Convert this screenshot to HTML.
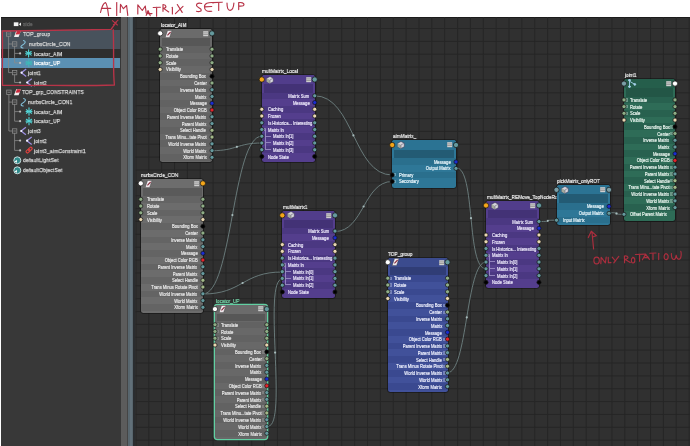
<!DOCTYPE html><html><head><meta charset="utf-8"><style>
*{margin:0;padding:0;box-sizing:border-box}
html,body{width:690px;height:446px;overflow:hidden;background:#ffffff;font-family:"Liberation Sans", sans-serif}
body>div,body>svg{will-change:transform}
.abs{position:absolute}
.lbl{position:absolute;font-size:6.1px;line-height:7px;white-space:nowrap;-webkit-text-stroke:0.2px currentColor;transform:scaleX(.78);transform-origin:0 50%}
.nd{position:absolute;border-radius:2.5px;overflow:hidden}
.hd,.sr,.rw{position:absolute;left:0;right:0}
.sr{left:1.6px;right:1.6px}
.tx{position:absolute;font-size:5.6px;line-height:6px;white-space:nowrap;-webkit-text-stroke:0.18px currentColor;transform:scaleX(.74);transform-origin:0 50%}
.tx.r{transform-origin:100% 50%}
.gp{position:absolute;width:2.6px;height:3.4px;opacity:.75}
.sb{position:absolute;opacity:.9}
.ol{position:absolute;font-size:6.2px;line-height:8px;white-space:nowrap;color:#dadada;-webkit-text-stroke:0.25px currentColor;letter-spacing:0.15px;transform:scaleX(.82);transform-origin:0 50%}
</style></head><body>

<div class="abs" style="left:1px;top:16.7px;width:689px;height:430px;background:#303030"></div>
<div class="abs" style="left:1px;top:17px;width:120px;height:429px;background:#383838"></div>
<div class="abs" style="left:1px;top:16.7px;width:120px;height:12.8px;background:#313131"></div>
<div class="abs" style="left:1px;top:16.7px;width:689px;height:1.4px;background:#1c1c1c"></div>
<div class="abs" style="left:1px;top:29.5px;width:119.4px;height:19.5px;background:#48525c"></div>
<div class="abs" style="left:1px;top:49px;width:120px;height:8.8px;background:#2e2e2e"></div>
<div class="abs" style="left:1px;top:57.8px;width:119.4px;height:10px;background:#5b90b3"></div>
<div class="abs" style="left:121px;top:17px;width:5.5px;height:429px;background:#5c5c5c"></div>
<div class="abs" style="left:126.5px;top:17px;width:1.2px;height:429px;background:#454545"></div>
<div class="abs" style="left:127.7px;top:17px;width:5.3px;height:429px;background:#58666e"></div>
<div class="abs" style="left:129.5px;top:17px;width:2.2px;height:429px;background:#617079"></div>
<div class="abs" style="left:133px;top:17px;width:1.8px;height:429px;background:#2a2d30"></div>
<div class="ol" style="left:22.8px;top:20.3px;color:#6a6a6a;">side</div>
<div class="ol" style="left:22.9px;top:30.4px;">TOP_group</div>
<div class="ol" style="left:28.5px;top:40.1px;">nurbsCircle_CON</div>
<div class="ol" style="left:34.1px;top:49.5px;">locator_AIM</div>
<div class="ol" style="left:34.1px;top:59.0px;color:#ffffff;">locator_UP</div>
<div class="ol" style="left:27.6px;top:68.7px;">joint1</div>
<div class="ol" style="left:33.6px;top:78.6px;">joint2</div>
<div class="ol" style="left:22.0px;top:88.4px;">TOP_grp_CONSTRAINTS</div>
<div class="ol" style="left:28.3px;top:98.3px;">nurbsCircle_CON1</div>
<div class="ol" style="left:34.4px;top:107.7px;">locator_AIM</div>
<div class="ol" style="left:34.4px;top:117.3px;">locator_UP</div>
<div class="ol" style="left:27.6px;top:127.0px;">joint3</div>
<div class="ol" style="left:33.6px;top:136.7px;">joint2</div>
<div class="ol" style="left:33.6px;top:146.5px;">joint3_aimConstraint1</div>
<div class="ol" style="left:22.5px;top:156.4px;">defaultLightSet</div>
<div class="ol" style="left:22.5px;top:166.3px;">defaultObjectSet</div>
<svg class="abs" style="left:0;top:0" width="130" height="190">
<g stroke="#8a8a8a" stroke-width="0.8" fill="none">
<path d="M8.6,36 V72.6 H12.4 M8.6,44 H12.4"/>
<path d="M14.6,46 V62.9 H19.4 M14.6,53.4 H19.4"/>
<path d="M14.6,74.6 V82.5 H19.4"/>
<path d="M8.9,94.3 V131 H12.4 M8.9,102.1 H12.4"/>
<path d="M14.6,104 V121.2 H19.4 M14.6,111.6 H19.4"/>
<path d="M14.6,133 V150.4 H19.4 M14.6,140.6 H19.4"/>
<rect x="6.4" y="31.8" width="4.4" height="4.4" fill="none" stroke="#8a8a8a"/>
<path d="M7.3,34.0 H9.9"/>
<rect x="12.4" y="41.8" width="4.4" height="4.4" fill="none" stroke="#8a8a8a"/>
<path d="M13.3,44.0 H15.9"/>
<rect x="12.4" y="70.4" width="4.4" height="4.4" fill="none" stroke="#8a8a8a"/>
<path d="M13.3,72.6 H15.9"/>
<rect x="6.7" y="90.1" width="4.4" height="4.4" fill="none" stroke="#8a8a8a"/>
<path d="M7.6,92.3 H10.2"/>
<rect x="12.4" y="99.9" width="4.4" height="4.4" fill="none" stroke="#8a8a8a"/>
<path d="M13.3,102.1 H15.9"/>
<rect x="12.4" y="128.8" width="4.4" height="4.4" fill="none" stroke="#8a8a8a"/>
<path d="M13.3,131.0 H15.9"/>
</g>
<circle cx="20.1" cy="53.4" r="1.1" fill="#bdbdbd"/>
<circle cx="20.1" cy="62.9" r="1.1" fill="#bdbdbd"/>
<circle cx="20.1" cy="82.5" r="1.1" fill="#bdbdbd"/>
<circle cx="20.1" cy="111.6" r="1.1" fill="#bdbdbd"/>
<circle cx="20.1" cy="121.2" r="1.1" fill="#bdbdbd"/>
<circle cx="20.1" cy="140.6" r="1.1" fill="#bdbdbd"/>
<circle cx="20.1" cy="150.4" r="1.1" fill="#bdbdbd"/>
<rect x="13.8" y="22.3" width="4.6" height="3.8" fill="#f4f4f4"/><path d="M18.8,24.2 L21.0,22.4 L21.0,26.0Z" fill="#f4f4f4"/>
<path d="M16.2,31.0 L20.8,31.0 L18.6,37.0 L14,37.0Z" fill="#f2eeee"/><path d="M17.0,31.0 L20.8,31.0 L19.6,34.2 L15.6,34.6Z" fill="#c92a3c"/>
<path d="M23.0,40.6 C25.4,40.800000000000004 25.8,42.2 24.4,43.6 L21.400000000000002,45.800000000000004 C20.2,47.0 21.2,48.2 23.400000000000002,48.0" fill="none" stroke="#86c4de" stroke-width="1.05"/>
<g stroke="#52d4d6" stroke-width="1.1" stroke-linecap="round"><line x1="28.60" y1="49.70" x2="28.60" y2="56.90"/><line x1="26.00" y1="51.50" x2="31.20" y2="55.10"/><line x1="26.00" y1="55.10" x2="31.20" y2="51.50"/><line x1="25.60" y1="53.30" x2="31.60" y2="53.30"/></g>
<g stroke="#3fb8b8" stroke-width="1.1" stroke-linecap="round"><line x1="28.80" y1="59.30" x2="28.80" y2="66.50"/><line x1="26.20" y1="61.10" x2="31.40" y2="64.70"/><line x1="26.20" y1="64.70" x2="31.40" y2="61.10"/><line x1="25.80" y1="62.90" x2="31.80" y2="62.90"/></g>
<path d="M26.2,69.0 L21.4,72.7 L26.2,76.4" fill="none" stroke="#9c8ee2" stroke-width="1.3"/><circle cx="21.599999999999998" cy="72.7" r="1.1" fill="#f4f4ff"/>
<path d="M31.8,78.8 L27,82.5 L31.8,86.2" fill="none" stroke="#9c8ee2" stroke-width="1.3"/><circle cx="27.2" cy="82.5" r="1.1" fill="#f4f4ff"/>
<path d="M16.2,89.2 L20.8,89.2 L18.6,95.2 L14,95.2Z" fill="#f2eeee"/><path d="M17.0,89.2 L20.8,89.2 L19.6,92.4 L15.6,92.8Z" fill="#c92a3c"/>
<path d="M23.2,98.60000000000001 C25.6,98.8 26,100.2 24.6,101.60000000000001 L21.6,103.8 C20.4,105.0 21.4,106.2 23.6,106.0" fill="none" stroke="#86c4de" stroke-width="1.05"/>
<g stroke="#52d4d6" stroke-width="1.1" stroke-linecap="round"><line x1="29.00" y1="107.90" x2="29.00" y2="115.10"/><line x1="26.40" y1="109.70" x2="31.60" y2="113.30"/><line x1="26.40" y1="113.30" x2="31.60" y2="109.70"/><line x1="26.00" y1="111.50" x2="32.00" y2="111.50"/></g>
<g stroke="#52d4d6" stroke-width="1.1" stroke-linecap="round"><line x1="29.00" y1="117.50" x2="29.00" y2="124.70"/><line x1="26.40" y1="119.30" x2="31.60" y2="122.90"/><line x1="26.40" y1="122.90" x2="31.60" y2="119.30"/><line x1="26.00" y1="121.10" x2="32.00" y2="121.10"/></g>
<path d="M25.900000000000002,127.3 L21.1,131.0 L25.900000000000002,134.7" fill="none" stroke="#9c8ee2" stroke-width="1.3"/><circle cx="21.3" cy="131.0" r="1.1" fill="#f4f4ff"/>
<path d="M31.7,137.0 L26.9,140.70000000000002 L31.7,144.4" fill="none" stroke="#9c8ee2" stroke-width="1.3"/><circle cx="27.099999999999998" cy="140.70000000000002" r="1.1" fill="#f4f4ff"/>
<g fill="none" stroke="#d8403e" stroke-width="1.2"><rect x="25.900000000000002" y="149.79999999999998" width="4.2" height="2.6" rx="1.3" transform="rotate(-40 28.0 151.1)"/><rect x="28.1" y="147.79999999999998" width="4.2" height="2.6" rx="1.3" transform="rotate(-40 30.200000000000003 149.1)"/></g>
<circle cx="17.3" cy="160.3" r="3.5" fill="#2f8a8a" stroke="#d8e4e4" stroke-width="0.9"/><path d="M14.6,161.6 L16.8,159.8 L17.0,162.8Z" fill="#ffffff"/>
<circle cx="17.3" cy="170.3" r="3.5" fill="#2f8a8a" stroke="#d8e4e4" stroke-width="0.9"/><path d="M14.6,171.6 L16.8,169.8 L17.0,172.8Z" fill="#ffffff"/>
</svg>
<svg class="abs" style="left:0;top:0" width="690" height="446">
<defs><clipPath id="cv"><rect x="135.6" y="17" width="560" height="430"/></clipPath></defs>
<g clip-path="url(#cv)" stroke="#262626" stroke-width="1">
<line x1="123.07" y1="17" x2="123.07" y2="446"/>
<line x1="135.94" y1="17" x2="135.94" y2="446"/>
<line x1="148.80" y1="17" x2="148.80" y2="446"/>
<line x1="161.67" y1="17" x2="161.67" y2="446"/>
<line x1="174.53" y1="17" x2="174.53" y2="446"/>
<line x1="187.40" y1="17" x2="187.40" y2="446"/>
<line x1="200.26" y1="17" x2="200.26" y2="446"/>
<line x1="213.12" y1="17" x2="213.12" y2="446"/>
<line x1="225.99" y1="17" x2="225.99" y2="446"/>
<line x1="238.86" y1="17" x2="238.86" y2="446"/>
<line x1="251.72" y1="17" x2="251.72" y2="446"/>
<line x1="264.59" y1="17" x2="264.59" y2="446"/>
<line x1="277.45" y1="17" x2="277.45" y2="446"/>
<line x1="290.32" y1="17" x2="290.32" y2="446"/>
<line x1="303.18" y1="17" x2="303.18" y2="446"/>
<line x1="316.05" y1="17" x2="316.05" y2="446"/>
<line x1="328.91" y1="17" x2="328.91" y2="446"/>
<line x1="341.77" y1="17" x2="341.77" y2="446"/>
<line x1="354.64" y1="17" x2="354.64" y2="446"/>
<line x1="367.50" y1="17" x2="367.50" y2="446"/>
<line x1="380.37" y1="17" x2="380.37" y2="446"/>
<line x1="393.24" y1="17" x2="393.24" y2="446"/>
<line x1="406.10" y1="17" x2="406.10" y2="446"/>
<line x1="418.97" y1="17" x2="418.97" y2="446"/>
<line x1="431.83" y1="17" x2="431.83" y2="446"/>
<line x1="444.69" y1="17" x2="444.69" y2="446"/>
<line x1="457.56" y1="17" x2="457.56" y2="446"/>
<line x1="470.43" y1="17" x2="470.43" y2="446"/>
<line x1="483.29" y1="17" x2="483.29" y2="446"/>
<line x1="496.16" y1="17" x2="496.16" y2="446"/>
<line x1="509.02" y1="17" x2="509.02" y2="446"/>
<line x1="521.88" y1="17" x2="521.88" y2="446"/>
<line x1="534.75" y1="17" x2="534.75" y2="446"/>
<line x1="547.62" y1="17" x2="547.62" y2="446"/>
<line x1="560.48" y1="17" x2="560.48" y2="446"/>
<line x1="573.35" y1="17" x2="573.35" y2="446"/>
<line x1="586.21" y1="17" x2="586.21" y2="446"/>
<line x1="599.08" y1="17" x2="599.08" y2="446"/>
<line x1="611.94" y1="17" x2="611.94" y2="446"/>
<line x1="624.81" y1="17" x2="624.81" y2="446"/>
<line x1="637.67" y1="17" x2="637.67" y2="446"/>
<line x1="650.54" y1="17" x2="650.54" y2="446"/>
<line x1="663.40" y1="17" x2="663.40" y2="446"/>
<line x1="676.27" y1="17" x2="676.27" y2="446"/>
<line x1="689.13" y1="17" x2="689.13" y2="446"/>
<line x1="135" y1="15.63" x2="690" y2="15.63"/>
<line x1="135" y1="28.50" x2="690" y2="28.50"/>
<line x1="135" y1="41.37" x2="690" y2="41.37"/>
<line x1="135" y1="54.23" x2="690" y2="54.23"/>
<line x1="135" y1="67.09" x2="690" y2="67.09"/>
<line x1="135" y1="79.96" x2="690" y2="79.96"/>
<line x1="135" y1="92.83" x2="690" y2="92.83"/>
<line x1="135" y1="105.69" x2="690" y2="105.69"/>
<line x1="135" y1="118.56" x2="690" y2="118.56"/>
<line x1="135" y1="131.42" x2="690" y2="131.42"/>
<line x1="135" y1="144.28" x2="690" y2="144.28"/>
<line x1="135" y1="157.15" x2="690" y2="157.15"/>
<line x1="135" y1="170.02" x2="690" y2="170.02"/>
<line x1="135" y1="182.88" x2="690" y2="182.88"/>
<line x1="135" y1="195.75" x2="690" y2="195.75"/>
<line x1="135" y1="208.61" x2="690" y2="208.61"/>
<line x1="135" y1="221.47" x2="690" y2="221.47"/>
<line x1="135" y1="234.34" x2="690" y2="234.34"/>
<line x1="135" y1="247.21" x2="690" y2="247.21"/>
<line x1="135" y1="260.07" x2="690" y2="260.07"/>
<line x1="135" y1="272.94" x2="690" y2="272.94"/>
<line x1="135" y1="285.80" x2="690" y2="285.80"/>
<line x1="135" y1="298.67" x2="690" y2="298.67"/>
<line x1="135" y1="311.53" x2="690" y2="311.53"/>
<line x1="135" y1="324.39" x2="690" y2="324.39"/>
<line x1="135" y1="337.26" x2="690" y2="337.26"/>
<line x1="135" y1="350.12" x2="690" y2="350.12"/>
<line x1="135" y1="362.99" x2="690" y2="362.99"/>
<line x1="135" y1="375.86" x2="690" y2="375.86"/>
<line x1="135" y1="388.72" x2="690" y2="388.72"/>
<line x1="135" y1="401.58" x2="690" y2="401.58"/>
<line x1="135" y1="414.45" x2="690" y2="414.45"/>
<line x1="135" y1="427.31" x2="690" y2="427.31"/>
<line x1="135" y1="440.18" x2="690" y2="440.18"/>
</g></svg>
<svg class="abs" style="left:0;top:0" width="690" height="446">
<path d="M212.0,150.7 C236.9,150.7 236.9,143.0 261.8,143.0" fill="none" stroke="#738787" stroke-width="0.85"/><circle cx="236.9" cy="146.8" r="1.1" fill="#a8bcbc"/>
<path d="M202.9,294.0 C232.4,294.0 232.4,136.2 261.8,136.2" fill="none" stroke="#738787" stroke-width="0.85"/><circle cx="232.4" cy="215.1" r="1.1" fill="#a8bcbc"/>
<path d="M202.9,294.0 C242.6,294.0 242.6,272.0 282.3,272.0" fill="none" stroke="#738787" stroke-width="0.85"/><circle cx="242.6" cy="283.0" r="1.1" fill="#a8bcbc"/>
<path d="M268.0,426.2 C288.0,426.2 262.3,279.0 282.3,279.0" fill="none" stroke="#738787" stroke-width="0.85"/><circle cx="275.1" cy="352.6" r="1.1" fill="#a8bcbc"/>
<path d="M314.7,95.8 C353.4,95.8 353.4,175.0 392.2,175.0" fill="none" stroke="#738787" stroke-width="0.85"/><circle cx="353.4" cy="135.4" r="1.1" fill="#a8bcbc"/>
<path d="M335.0,231.5 C363.6,231.5 363.6,181.5 392.2,181.5" fill="none" stroke="#738787" stroke-width="0.85"/><circle cx="363.6" cy="206.5" r="1.1" fill="#a8bcbc"/>
<path d="M456.0,167.7 C476.0,167.7 466.0,268.8 486.0,268.8" fill="none" stroke="#738787" stroke-width="0.85"/><circle cx="471.0" cy="218.2" r="1.1" fill="#a8bcbc"/>
<path d="M447.5,372.7 C467.5,372.7 466.0,262.0 486.0,262.0" fill="none" stroke="#738787" stroke-width="0.85"/><circle cx="466.8" cy="317.4" r="1.1" fill="#a8bcbc"/>
<path d="M539.0,221.5 C559.0,221.5 536.5,220.2 556.5,220.2" fill="none" stroke="#738787" stroke-width="0.85"/><circle cx="547.8" cy="220.8" r="1.1" fill="#a8bcbc"/>
<path d="M609.0,212.7 C629.0,212.7 604.0,214.3 624.0,214.3" fill="none" stroke="#738787" stroke-width="0.85"/><circle cx="616.5" cy="213.5" r="1.1" fill="#a8bcbc"/>
</svg>
<div class="lbl" style="left:160.80px;top:20.70px;color:#f2f2f2;">locator_AIM</div>
<div class="nd" style="left:160.20px;top:29.00px;width:51.80px;height:133.00px;background:#686868;box-shadow:0 0 0 0.8px rgba(10,10,10,.6);">
<div class="hd" style="height:8.75px;background:#6b6b6b"></div>
<div class="sr" style="top:8.75px;height:8.07px;background:#575757"></div>
<div class="rw" style="top:16.82px;height:6.81px;background:#626262"></div>
<div class="rw" style="top:23.58px;height:6.81px;background:#686868"></div>
<div class="rw" style="top:30.34px;height:6.81px;background:#626262"></div>
<div class="rw" style="top:37.10px;height:6.81px;background:#686868"></div>
<div class="rw" style="top:43.86px;height:6.81px;background:#626262"></div>
<div class="rw" style="top:50.62px;height:6.81px;background:#686868"></div>
<div class="rw" style="top:57.38px;height:6.81px;background:#626262"></div>
<div class="rw" style="top:64.14px;height:6.81px;background:#686868"></div>
<div class="rw" style="top:70.90px;height:6.81px;background:#626262"></div>
<div class="rw" style="top:77.66px;height:6.81px;background:#686868"></div>
<div class="rw" style="top:84.42px;height:6.81px;background:#626262"></div>
<div class="rw" style="top:91.18px;height:6.81px;background:#686868"></div>
<div class="rw" style="top:97.94px;height:6.81px;background:#626262"></div>
<div class="rw" style="top:104.70px;height:6.81px;background:#686868"></div>
<div class="rw" style="top:111.46px;height:6.81px;background:#626262"></div>
<div class="rw" style="top:118.22px;height:6.81px;background:#686868"></div>
<div class="rw" style="top:124.98px;height:6.81px;background:#626262"></div>
<div class="tx" style="left:5.70px;top:17.20px;color:#ececec">Translate</div>
<div class="tx" style="left:5.70px;top:23.96px;color:#ececec">Rotate</div>
<div class="tx" style="left:5.70px;top:30.72px;color:#ececec">Scale</div>
<div class="tx" style="left:5.70px;top:37.48px;color:#ececec">Visibility</div>
<div class="tx r" style="right:5.50px;top:44.24px;color:#ececec">Bounding Box</div>
<div class="tx r" style="right:5.50px;top:51.00px;color:#ececec">Center</div>
<div class="tx r" style="right:5.50px;top:57.76px;color:#ececec">Inverse Matrix</div>
<div class="tx r" style="right:5.50px;top:64.52px;color:#ececec">Matrix</div>
<div class="tx r" style="right:5.50px;top:71.28px;color:#ececec">Message</div>
<div class="tx r" style="right:5.50px;top:78.04px;color:#ececec">Object Color RGB</div>
<div class="tx r" style="right:5.50px;top:84.80px;color:#ececec">Parent Inverse Matrix</div>
<div class="tx r" style="right:5.50px;top:91.56px;color:#ececec">Parent Matrix</div>
<div class="tx r" style="right:5.50px;top:98.32px;color:#ececec">Select Handle</div>
<div class="tx r" style="right:5.50px;top:105.08px;color:#ececec">Trans Minu...tate Pivot</div>
<div class="tx r" style="right:5.50px;top:111.84px;color:#ececec">World Inverse Matrix</div>
<div class="tx r" style="right:5.50px;top:118.60px;color:#ececec">World Matrix</div>
<div class="tx r" style="right:5.50px;top:125.36px;color:#ececec">Xform Matrix</div>
</div>
<svg class="abs" style="left:164.60px;top:29.57px" width="8" height="8" viewBox="0 0 8 8"><path d="M2.6,0.5 L6.9,0.5 L4.6,7.4 L0.2,7.4Z" fill="#f3eef2" stroke="#2a2a2a" stroke-width="0.35"/><path d="M5.6,2.0 L2.4,5.4" stroke="#8a3040" stroke-width="1.1"/></svg>
<svg class="abs" style="left:203.00px;top:30.77px" width="6" height="6" viewBox="0 0 6 6"><rect x="0.2" y="0.2" width="5" height="5" fill="#cfcfcf"/><path d="M0.2,1.9 H5.2 M0.2,3.5 H5.2" stroke="#7a7a7a" stroke-width="0.6"/></svg>
<div class="lbl" style="left:262.40px;top:66.60px;color:#f2f2f2;">multMatrix_Local</div>
<div class="nd" style="left:261.80px;top:74.90px;width:52.90px;height:86.90px;background:#543e8d;box-shadow:0 0 0 0.8px rgba(10,10,10,.6);">
<div class="hd" style="height:9.12px;background:#513d8b"></div>
<div class="sr" style="top:9.12px;height:8.41px;background:#433276"></div>
<div class="rw" style="top:17.53px;height:6.79px;background:#4b3882"></div>
<div class="rw" style="top:24.27px;height:6.79px;background:#543e8d"></div>
<div class="rw" style="top:31.01px;height:6.79px;background:#4b3882"></div>
<div class="rw" style="top:37.75px;height:6.79px;background:#543e8d"></div>
<div class="rw" style="top:44.49px;height:6.79px;background:#4b3882"></div>
<div class="rw" style="top:51.23px;height:6.79px;background:#543e8d"></div>
<div class="rw" style="top:57.97px;height:6.79px;background:#4b3882"></div>
<div class="rw" style="top:64.71px;height:6.79px;background:#543e8d"></div>
<div class="rw" style="top:71.45px;height:6.79px;background:#4b3882"></div>
<div class="rw" style="top:78.19px;height:6.79px;background:#543e8d"></div>
<div class="tx r" style="right:5.50px;top:17.90px;color:#f2eeff">Matrix Sum</div>
<div class="tx r" style="right:5.50px;top:24.64px;color:#f2eeff">Message</div>
<div class="tx" style="left:5.70px;top:31.38px;color:#f2eeff">Caching</div>
<div class="tx" style="left:5.70px;top:38.12px;color:#f2eeff">Frozen</div>
<div class="tx" style="left:5.70px;top:44.86px;color:#f2eeff">Is Historica... Interesting</div>
<div class="tx" style="left:5.70px;top:51.60px;color:#f2eeff">Matrix In</div>
<div class="gp" style="left:1.3px;top:52.90px;background:#9a8cc4"></div>
<div class="tx" style="left:10.70px;top:58.34px;color:#f2eeff">Matrix In[1]</div>
<div class="sb" style="left:3.10px;top:54.40px;height:7.24px;width:6.40px;border-left:0.6px solid #9a8cc4;border-bottom:0.6px solid #9a8cc4;"></div>
<div class="tx" style="left:10.70px;top:65.08px;color:#f2eeff">Matrix In[2]</div>
<div class="sb" style="left:3.10px;top:61.14px;height:7.24px;width:6.40px;border-left:0.6px solid #9a8cc4;border-bottom:0.6px solid #9a8cc4;"></div>
<div class="tx" style="left:10.70px;top:71.82px;color:#f2eeff">Matrix In[3]</div>
<div class="sb" style="left:3.10px;top:67.88px;height:7.24px;width:6.40px;border-left:0.6px solid #9a8cc4;border-bottom:0.6px solid #9a8cc4;"></div>
<div class="tx" style="left:5.70px;top:78.56px;color:#f2eeff">Node State</div>
</div>
<svg class="abs" style="left:266.40px;top:75.56px" width="8" height="8" viewBox="0 0 8 8"><path d="M4,0.5 L7.3,2.2 L7.3,5.7 L4,7.4 L0.7,5.7 L0.7,2.2Z" fill="#d6d6dc" stroke="#2a2440" stroke-width="0.45"/><path d="M0.7,2.2 L4,3.9 L4,7.4 L0.7,5.7Z" fill="#a4aa9c"/><path d="M4,3.9 L7.3,2.2 M4,3.9 L4,7.4" stroke="#5a5070" stroke-width="0.5"/></svg>
<svg class="abs" style="left:305.70px;top:76.86px" width="6" height="6" viewBox="0 0 6 6"><rect x="0.2" y="0.2" width="5" height="5" fill="#cfcfcf"/><path d="M0.2,1.9 H5.2 M0.2,3.5 H5.2" stroke="#7a7a7a" stroke-width="0.6"/></svg>
<div class="lbl" style="left:392.80px;top:131.90px;color:#f2f2f2;">aimMatrix_</div>
<div class="nd" style="left:392.20px;top:140.20px;width:63.80px;height:47.60px;background:#2e7797;box-shadow:0 0 0 0.8px rgba(10,10,10,.6);">
<div class="hd" style="height:9.59px;background:#2b7393"></div>
<div class="sr" style="top:9.59px;height:8.85px;background:#235b74"></div>
<div class="rw" style="top:18.44px;height:6.58px;background:#2a6f8d"></div>
<div class="rw" style="top:24.97px;height:6.58px;background:#2e7797"></div>
<div class="rw" style="top:31.50px;height:6.58px;background:#2a6f8d"></div>
<div class="rw" style="top:38.03px;height:6.58px;background:#2e7797"></div>
<div class="tx r" style="right:5.50px;top:18.70px;color:#effaff">Message</div>
<div class="tx r" style="right:5.50px;top:25.23px;color:#effaff">Output Matrix</div>
<div class="tx" style="left:6.60px;top:31.76px;color:#effaff">Primary</div>
<div class="gp" style="left:1.3px;top:33.06px;background:#7ab0c4"></div>
<div class="tx" style="left:6.60px;top:38.29px;color:#effaff">Secondary</div>
<div class="gp" style="left:1.3px;top:39.59px;background:#7ab0c4"></div>
</div>
<svg class="abs" style="left:396.80px;top:141.09px" width="8" height="8" viewBox="0 0 8 8"><path d="M4,0.5 L7.3,2.2 L7.3,5.7 L4,7.4 L0.7,5.7 L0.7,2.2Z" fill="#d6d6dc" stroke="#2a2440" stroke-width="0.45"/><path d="M0.7,2.2 L4,3.9 L4,7.4 L0.7,5.7Z" fill="#a4aa9c"/><path d="M4,3.9 L7.3,2.2 M4,3.9 L4,7.4" stroke="#5a5070" stroke-width="0.5"/></svg>
<svg class="abs" style="left:447.00px;top:142.39px" width="6" height="6" viewBox="0 0 6 6"><rect x="0.2" y="0.2" width="5" height="5" fill="#cfcfcf"/><path d="M0.2,1.9 H5.2 M0.2,3.5 H5.2" stroke="#7a7a7a" stroke-width="0.6"/></svg>
<div class="lbl" style="left:624.60px;top:70.70px;color:#f2f2f2;">joint1</div>
<div class="nd" style="left:624.00px;top:79.00px;width:51.00px;height:142.00px;background:#2e6c57;box-shadow:0 0 0 0.8px rgba(10,10,10,.6);">
<div class="hd" style="height:9.12px;background:#255e4b"></div>
<div class="sr" style="top:9.12px;height:8.42px;background:#235646"></div>
<div class="rw" style="top:17.54px;height:6.78px;background:#28614f"></div>
<div class="rw" style="top:24.27px;height:6.78px;background:#2e6c57"></div>
<div class="rw" style="top:31.00px;height:6.78px;background:#28614f"></div>
<div class="rw" style="top:37.73px;height:6.78px;background:#2e6c57"></div>
<div class="rw" style="top:44.46px;height:6.78px;background:#28614f"></div>
<div class="rw" style="top:51.19px;height:6.78px;background:#2e6c57"></div>
<div class="rw" style="top:57.92px;height:6.78px;background:#28614f"></div>
<div class="rw" style="top:64.65px;height:6.78px;background:#2e6c57"></div>
<div class="rw" style="top:71.38px;height:6.78px;background:#28614f"></div>
<div class="rw" style="top:78.11px;height:6.78px;background:#2e6c57"></div>
<div class="rw" style="top:84.84px;height:6.78px;background:#28614f"></div>
<div class="rw" style="top:91.57px;height:6.78px;background:#2e6c57"></div>
<div class="rw" style="top:98.30px;height:6.78px;background:#28614f"></div>
<div class="rw" style="top:105.03px;height:6.78px;background:#2e6c57"></div>
<div class="rw" style="top:111.76px;height:6.78px;background:#28614f"></div>
<div class="rw" style="top:118.49px;height:6.78px;background:#2e6c57"></div>
<div class="rw" style="top:125.22px;height:6.78px;background:#28614f"></div>
<div class="rw" style="top:131.95px;height:6.78px;background:#2e6c57"></div>
<div class="tx" style="left:5.70px;top:17.90px;color:#eef8f2">Translate</div>
<div class="gp" style="left:1.3px;top:19.20px;background:#80aa98"></div>
<div class="tx" style="left:5.70px;top:24.63px;color:#eef8f2">Rotate</div>
<div class="gp" style="left:1.3px;top:25.93px;background:#80aa98"></div>
<div class="tx" style="left:5.70px;top:31.36px;color:#eef8f2">Scale</div>
<div class="gp" style="left:1.3px;top:32.66px;background:#80aa98"></div>
<div class="tx" style="left:5.70px;top:38.09px;color:#eef8f2">Visibility</div>
<div class="tx r" style="right:5.50px;top:44.82px;color:#eef8f2">Bounding Box</div>
<div class="gp" style="right:2.0px;top:46.12px;background:#80aa98"></div>
<div class="tx r" style="right:5.50px;top:51.55px;color:#eef8f2">Center</div>
<div class="gp" style="right:2.0px;top:52.85px;background:#80aa98"></div>
<div class="tx r" style="right:5.50px;top:58.28px;color:#eef8f2">Inverse Matrix</div>
<div class="tx r" style="right:5.50px;top:65.01px;color:#eef8f2">Matrix</div>
<div class="tx r" style="right:5.50px;top:71.74px;color:#eef8f2">Message</div>
<div class="tx r" style="right:5.50px;top:78.47px;color:#eef8f2">Object Color RGB</div>
<div class="gp" style="right:2.0px;top:79.77px;background:#80aa98"></div>
<div class="tx r" style="right:5.50px;top:85.20px;color:#eef8f2">Parent Inverse Matrix</div>
<div class="gp" style="right:2.0px;top:86.50px;background:#80aa98"></div>
<div class="tx r" style="right:5.50px;top:91.93px;color:#eef8f2">Parent Matrix</div>
<div class="gp" style="right:2.0px;top:93.23px;background:#80aa98"></div>
<div class="tx r" style="right:5.50px;top:98.66px;color:#eef8f2">Select Handle</div>
<div class="gp" style="right:2.0px;top:99.96px;background:#80aa98"></div>
<div class="tx r" style="right:5.50px;top:105.39px;color:#eef8f2">Trans Minu...tate Pivot</div>
<div class="gp" style="right:2.0px;top:106.69px;background:#80aa98"></div>
<div class="tx r" style="right:5.50px;top:112.12px;color:#eef8f2">World Inverse Matrix</div>
<div class="gp" style="right:2.0px;top:113.42px;background:#80aa98"></div>
<div class="tx r" style="right:5.50px;top:118.85px;color:#eef8f2">World Matrix</div>
<div class="gp" style="right:2.0px;top:120.15px;background:#80aa98"></div>
<div class="tx r" style="right:5.50px;top:125.58px;color:#eef8f2">Xform Matrix</div>
<div class="tx" style="left:5.70px;top:132.31px;color:#eef8f2">Offset Parent Matrix</div>
</div>
<svg class="abs" style="left:628.00px;top:78.96px" width="9" height="9" viewBox="0 0 9 9" fill="none" stroke="#a8d4ee" stroke-width="0.9"><path d="M1.5,1 L1.5,8 M1.5,2.2 L6.5,5.2 M0.5,1.2 L2.5,1.2 M0.5,7.6 L2.5,7.6"/><circle cx="1.5" cy="1.2" r="0.9" fill="#a8d4ee"/><circle cx="1.5" cy="7.6" r="0.9" fill="#a8d4ee"/><circle cx="6.8" cy="5.4" r="0.9" fill="#a8d4ee"/></svg>
<svg class="abs" style="left:666.00px;top:80.96px" width="6" height="6" viewBox="0 0 6 6"><rect x="0.2" y="0.2" width="5" height="5" fill="#cfcfcf"/><path d="M0.2,1.9 H5.2 M0.2,3.5 H5.2" stroke="#7a7a7a" stroke-width="0.6"/></svg>
<div class="lbl" style="left:141.40px;top:170.60px;color:#f2f2f2;">nurbsCircle_CON</div>
<div class="nd" style="left:140.80px;top:178.90px;width:62.10px;height:133.90px;background:#6c6c6c;box-shadow:0 0 0 0.8px rgba(10,10,10,.6);">
<div class="hd" style="height:8.85px;background:#6d6d6d"></div>
<div class="sr" style="top:8.85px;height:8.17px;background:#5a5a5a"></div>
<div class="rw" style="top:17.03px;height:6.80px;background:#646464"></div>
<div class="rw" style="top:23.78px;height:6.80px;background:#6c6c6c"></div>
<div class="rw" style="top:30.53px;height:6.80px;background:#646464"></div>
<div class="rw" style="top:37.28px;height:6.80px;background:#6c6c6c"></div>
<div class="rw" style="top:44.03px;height:6.80px;background:#646464"></div>
<div class="rw" style="top:50.78px;height:6.80px;background:#6c6c6c"></div>
<div class="rw" style="top:57.53px;height:6.80px;background:#646464"></div>
<div class="rw" style="top:64.28px;height:6.80px;background:#6c6c6c"></div>
<div class="rw" style="top:71.03px;height:6.80px;background:#646464"></div>
<div class="rw" style="top:77.78px;height:6.80px;background:#6c6c6c"></div>
<div class="rw" style="top:84.53px;height:6.80px;background:#646464"></div>
<div class="rw" style="top:91.28px;height:6.80px;background:#6c6c6c"></div>
<div class="rw" style="top:98.03px;height:6.80px;background:#646464"></div>
<div class="rw" style="top:104.78px;height:6.80px;background:#6c6c6c"></div>
<div class="rw" style="top:111.53px;height:6.80px;background:#646464"></div>
<div class="rw" style="top:118.28px;height:6.80px;background:#6c6c6c"></div>
<div class="rw" style="top:125.03px;height:6.80px;background:#646464"></div>
<div class="tx" style="left:5.70px;top:17.40px;color:#ececec">Translate</div>
<div class="tx" style="left:5.70px;top:24.15px;color:#ececec">Rotate</div>
<div class="tx" style="left:5.70px;top:30.90px;color:#ececec">Scale</div>
<div class="tx" style="left:5.70px;top:37.65px;color:#ececec">Visibility</div>
<div class="tx r" style="right:5.50px;top:44.40px;color:#ececec">Bounding Box</div>
<div class="tx r" style="right:5.50px;top:51.15px;color:#ececec">Center</div>
<div class="tx r" style="right:5.50px;top:57.90px;color:#ececec">Inverse Matrix</div>
<div class="tx r" style="right:5.50px;top:64.65px;color:#ececec">Matrix</div>
<div class="tx r" style="right:5.50px;top:71.40px;color:#ececec">Message</div>
<div class="tx r" style="right:5.50px;top:78.15px;color:#ececec">Object Color RGB</div>
<div class="tx r" style="right:5.50px;top:84.90px;color:#ececec">Parent Inverse Matrix</div>
<div class="tx r" style="right:5.50px;top:91.65px;color:#ececec">Parent Matrix</div>
<div class="tx r" style="right:5.50px;top:98.40px;color:#ececec">Select Handle</div>
<div class="tx r" style="right:5.50px;top:105.15px;color:#ececec">Trans Minus Rotate Pivot</div>
<div class="tx r" style="right:5.50px;top:111.90px;color:#ececec">World Inverse Matrix</div>
<div class="tx r" style="right:5.50px;top:118.65px;color:#ececec">World Matrix</div>
<div class="tx r" style="right:5.50px;top:125.40px;color:#ececec">Xform Matrix</div>
</div>
<svg class="abs" style="left:145.20px;top:179.53px" width="8" height="8" viewBox="0 0 8 8"><path d="M2.6,0.5 L6.9,0.5 L4.6,7.4 L0.2,7.4Z" fill="#f3eef2" stroke="#2a2a2a" stroke-width="0.35"/><path d="M5.6,2.0 L2.4,5.4" stroke="#8a3040" stroke-width="1.1"/></svg>
<svg class="abs" style="left:193.90px;top:180.73px" width="6" height="6" viewBox="0 0 6 6"><rect x="0.2" y="0.2" width="5" height="5" fill="#cfcfcf"/><path d="M0.2,1.9 H5.2 M0.2,3.5 H5.2" stroke="#7a7a7a" stroke-width="0.6"/></svg>
<div class="lbl" style="left:486.60px;top:192.70px;color:#f2f2f2;">multMatrix_REMove_TopNodeRot</div>
<div class="nd" style="left:486.00px;top:201.00px;width:53.00px;height:86.60px;background:#543e8d;box-shadow:0 0 0 0.8px rgba(10,10,10,.6);">
<div class="hd" style="height:8.90px;background:#513d8b"></div>
<div class="sr" style="top:8.90px;height:8.22px;background:#433276"></div>
<div class="rw" style="top:17.12px;height:6.81px;background:#4b3882"></div>
<div class="rw" style="top:23.88px;height:6.81px;background:#543e8d"></div>
<div class="rw" style="top:30.64px;height:6.81px;background:#4b3882"></div>
<div class="rw" style="top:37.40px;height:6.81px;background:#543e8d"></div>
<div class="rw" style="top:44.16px;height:6.81px;background:#4b3882"></div>
<div class="rw" style="top:50.92px;height:6.81px;background:#543e8d"></div>
<div class="rw" style="top:57.68px;height:6.81px;background:#4b3882"></div>
<div class="rw" style="top:64.44px;height:6.81px;background:#543e8d"></div>
<div class="rw" style="top:71.20px;height:6.81px;background:#4b3882"></div>
<div class="rw" style="top:77.96px;height:6.81px;background:#543e8d"></div>
<div class="tx r" style="right:5.50px;top:17.50px;color:#f2eeff">Matrix Sum</div>
<div class="tx r" style="right:5.50px;top:24.26px;color:#f2eeff">Message</div>
<div class="tx" style="left:5.70px;top:31.02px;color:#f2eeff">Caching</div>
<div class="tx" style="left:5.70px;top:37.78px;color:#f2eeff">Frozen</div>
<div class="tx" style="left:5.70px;top:44.54px;color:#f2eeff">Is Historica... Interesting</div>
<div class="tx" style="left:5.70px;top:51.30px;color:#f2eeff">Matrix In</div>
<div class="gp" style="left:1.3px;top:52.60px;background:#9a8cc4"></div>
<div class="tx" style="left:10.70px;top:58.06px;color:#f2eeff">Matrix In[0]</div>
<div class="sb" style="left:3.10px;top:54.10px;height:7.26px;width:6.40px;border-left:0.6px solid #9a8cc4;border-bottom:0.6px solid #9a8cc4;"></div>
<div class="tx" style="left:10.70px;top:64.82px;color:#f2eeff">Matrix In[1]</div>
<div class="sb" style="left:3.10px;top:60.86px;height:7.26px;width:6.40px;border-left:0.6px solid #9a8cc4;border-bottom:0.6px solid #9a8cc4;"></div>
<div class="tx" style="left:10.70px;top:71.58px;color:#f2eeff">Matrix In[2]</div>
<div class="sb" style="left:3.10px;top:67.62px;height:7.26px;width:6.40px;border-left:0.6px solid #9a8cc4;border-bottom:0.6px solid #9a8cc4;"></div>
<div class="tx" style="left:5.70px;top:78.34px;color:#f2eeff">Node State</div>
</div>
<svg class="abs" style="left:490.60px;top:201.55px" width="8" height="8" viewBox="0 0 8 8"><path d="M4,0.5 L7.3,2.2 L7.3,5.7 L4,7.4 L0.7,5.7 L0.7,2.2Z" fill="#d6d6dc" stroke="#2a2440" stroke-width="0.45"/><path d="M0.7,2.2 L4,3.9 L4,7.4 L0.7,5.7Z" fill="#a4aa9c"/><path d="M4,3.9 L7.3,2.2 M4,3.9 L4,7.4" stroke="#5a5070" stroke-width="0.5"/></svg>
<svg class="abs" style="left:530.00px;top:202.85px" width="6" height="6" viewBox="0 0 6 6"><rect x="0.2" y="0.2" width="5" height="5" fill="#cfcfcf"/><path d="M0.2,1.9 H5.2 M0.2,3.5 H5.2" stroke="#7a7a7a" stroke-width="0.6"/></svg>
<div class="lbl" style="left:557.10px;top:176.90px;color:#f2f2f2;">pickMatrix_onlyROT</div>
<div class="nd" style="left:556.50px;top:185.20px;width:52.50px;height:40.10px;background:#2e7797;box-shadow:0 0 0 0.8px rgba(10,10,10,.6);">
<div class="hd" style="height:9.23px;background:#2b7393"></div>
<div class="sr" style="top:9.23px;height:8.52px;background:#235b74"></div>
<div class="rw" style="top:17.75px;height:6.95px;background:#2a6f8d"></div>
<div class="rw" style="top:24.65px;height:6.95px;background:#2e7797"></div>
<div class="rw" style="top:31.55px;height:6.95px;background:#2a6f8d"></div>
<div class="tx r" style="right:5.50px;top:18.20px;color:#effaff">Message</div>
<div class="tx r" style="right:5.50px;top:25.10px;color:#effaff">Output Matrix</div>
<div class="tx" style="left:5.70px;top:32.00px;color:#effaff">Input Matrix</div>
</div>
<svg class="abs" style="left:561.10px;top:185.91px" width="8" height="8" viewBox="0 0 8 8"><path d="M4,0.5 L7.3,2.2 L7.3,5.7 L4,7.4 L0.7,5.7 L0.7,2.2Z" fill="#d6d6dc" stroke="#2a2440" stroke-width="0.45"/><path d="M0.7,2.2 L4,3.9 L4,7.4 L0.7,5.7Z" fill="#a4aa9c"/><path d="M4,3.9 L7.3,2.2 M4,3.9 L4,7.4" stroke="#5a5070" stroke-width="0.5"/></svg>
<svg class="abs" style="left:600.00px;top:187.22px" width="6" height="6" viewBox="0 0 6 6"><rect x="0.2" y="0.2" width="5" height="5" fill="#cfcfcf"/><path d="M0.2,1.9 H5.2 M0.2,3.5 H5.2" stroke="#7a7a7a" stroke-width="0.6"/></svg>
<div class="lbl" style="left:282.90px;top:202.70px;color:#f2f2f2;">multMatrix1</div>
<div class="nd" style="left:282.30px;top:211.00px;width:52.70px;height:86.60px;background:#543e8d;box-shadow:0 0 0 0.8px rgba(10,10,10,.6);">
<div class="hd" style="height:8.69px;background:#513d8b"></div>
<div class="sr" style="top:8.69px;height:8.03px;background:#433276"></div>
<div class="rw" style="top:16.72px;height:6.81px;background:#4b3882"></div>
<div class="rw" style="top:23.48px;height:6.81px;background:#543e8d"></div>
<div class="rw" style="top:30.24px;height:6.81px;background:#4b3882"></div>
<div class="rw" style="top:37.00px;height:6.81px;background:#543e8d"></div>
<div class="rw" style="top:43.76px;height:6.81px;background:#4b3882"></div>
<div class="rw" style="top:50.52px;height:6.81px;background:#543e8d"></div>
<div class="rw" style="top:57.28px;height:6.81px;background:#4b3882"></div>
<div class="rw" style="top:64.04px;height:6.81px;background:#543e8d"></div>
<div class="rw" style="top:70.80px;height:6.81px;background:#4b3882"></div>
<div class="rw" style="top:77.56px;height:6.81px;background:#543e8d"></div>
<div class="tx r" style="right:5.50px;top:17.10px;color:#f2eeff">Matrix Sum</div>
<div class="tx r" style="right:5.50px;top:23.86px;color:#f2eeff">Message</div>
<div class="tx" style="left:5.70px;top:30.62px;color:#f2eeff">Caching</div>
<div class="tx" style="left:5.70px;top:37.38px;color:#f2eeff">Frozen</div>
<div class="tx" style="left:5.70px;top:44.14px;color:#f2eeff">Is Historica... Interesting</div>
<div class="tx" style="left:5.70px;top:50.90px;color:#f2eeff">Matrix In</div>
<div class="gp" style="left:1.3px;top:52.20px;background:#9a8cc4"></div>
<div class="tx" style="left:10.70px;top:57.66px;color:#f2eeff">Matrix In[0]</div>
<div class="sb" style="left:3.10px;top:53.70px;height:7.26px;width:6.40px;border-left:0.6px solid #9a8cc4;border-bottom:0.6px solid #9a8cc4;"></div>
<div class="tx" style="left:10.70px;top:64.42px;color:#f2eeff">Matrix In[1]</div>
<div class="sb" style="left:3.10px;top:60.46px;height:7.26px;width:6.40px;border-left:0.6px solid #9a8cc4;border-bottom:0.6px solid #9a8cc4;"></div>
<div class="tx" style="left:10.70px;top:71.18px;color:#f2eeff">Matrix In[2]</div>
<div class="sb" style="left:3.10px;top:67.22px;height:7.26px;width:6.40px;border-left:0.6px solid #9a8cc4;border-bottom:0.6px solid #9a8cc4;"></div>
<div class="tx" style="left:5.70px;top:77.94px;color:#f2eeff">Node State</div>
</div>
<svg class="abs" style="left:286.90px;top:211.45px" width="8" height="8" viewBox="0 0 8 8"><path d="M4,0.5 L7.3,2.2 L7.3,5.7 L4,7.4 L0.7,5.7 L0.7,2.2Z" fill="#d6d6dc" stroke="#2a2440" stroke-width="0.45"/><path d="M0.7,2.2 L4,3.9 L4,7.4 L0.7,5.7Z" fill="#a4aa9c"/><path d="M4,3.9 L7.3,2.2 M4,3.9 L4,7.4" stroke="#5a5070" stroke-width="0.5"/></svg>
<svg class="abs" style="left:326.00px;top:212.75px" width="6" height="6" viewBox="0 0 6 6"><rect x="0.2" y="0.2" width="5" height="5" fill="#cfcfcf"/><path d="M0.2,1.9 H5.2 M0.2,3.5 H5.2" stroke="#7a7a7a" stroke-width="0.6"/></svg>
<div class="lbl" style="left:388.40px;top:249.50px;color:#f2f2f2;">TOP_group</div>
<div class="nd" style="left:387.80px;top:257.80px;width:59.70px;height:133.70px;background:#41519a;box-shadow:0 0 0 0.8px rgba(10,10,10,.6);">
<div class="hd" style="height:8.85px;background:#3b4b8e"></div>
<div class="sr" style="top:8.85px;height:8.17px;background:#303d76"></div>
<div class="rw" style="top:17.01px;height:6.82px;background:#3a4990"></div>
<div class="rw" style="top:23.78px;height:6.82px;background:#41519a"></div>
<div class="rw" style="top:30.55px;height:6.82px;background:#3a4990"></div>
<div class="rw" style="top:37.32px;height:6.82px;background:#41519a"></div>
<div class="rw" style="top:44.09px;height:6.82px;background:#3a4990"></div>
<div class="rw" style="top:50.86px;height:6.82px;background:#41519a"></div>
<div class="rw" style="top:57.63px;height:6.82px;background:#3a4990"></div>
<div class="rw" style="top:64.40px;height:6.82px;background:#41519a"></div>
<div class="rw" style="top:71.17px;height:6.82px;background:#3a4990"></div>
<div class="rw" style="top:77.94px;height:6.82px;background:#41519a"></div>
<div class="rw" style="top:84.71px;height:6.82px;background:#3a4990"></div>
<div class="rw" style="top:91.48px;height:6.82px;background:#41519a"></div>
<div class="rw" style="top:98.25px;height:6.82px;background:#3a4990"></div>
<div class="rw" style="top:105.02px;height:6.82px;background:#41519a"></div>
<div class="rw" style="top:111.79px;height:6.82px;background:#3a4990"></div>
<div class="rw" style="top:118.56px;height:6.82px;background:#41519a"></div>
<div class="rw" style="top:125.33px;height:6.82px;background:#3a4990"></div>
<div class="tx" style="left:5.70px;top:17.40px;color:#f0f2ff">Translate</div>
<div class="gp" style="left:1.3px;top:18.70px;background:#8a96c8"></div>
<div class="tx" style="left:5.70px;top:24.17px;color:#f0f2ff">Rotate</div>
<div class="gp" style="left:1.3px;top:25.47px;background:#8a96c8"></div>
<div class="tx" style="left:5.70px;top:30.94px;color:#f0f2ff">Scale</div>
<div class="gp" style="left:1.3px;top:32.24px;background:#8a96c8"></div>
<div class="tx" style="left:5.70px;top:37.71px;color:#f0f2ff">Visibility</div>
<div class="tx r" style="right:5.50px;top:44.48px;color:#f0f2ff">Bounding Box</div>
<div class="gp" style="right:2.0px;top:45.78px;background:#8a96c8"></div>
<div class="tx r" style="right:5.50px;top:51.25px;color:#f0f2ff">Center</div>
<div class="gp" style="right:2.0px;top:52.55px;background:#8a96c8"></div>
<div class="tx r" style="right:5.50px;top:58.02px;color:#f0f2ff">Inverse Matrix</div>
<div class="tx r" style="right:5.50px;top:64.79px;color:#f0f2ff">Matrix</div>
<div class="tx r" style="right:5.50px;top:71.56px;color:#f0f2ff">Message</div>
<div class="tx r" style="right:5.50px;top:78.33px;color:#f0f2ff">Object Color RGB</div>
<div class="gp" style="right:2.0px;top:79.63px;background:#8a96c8"></div>
<div class="tx r" style="right:5.50px;top:85.10px;color:#f0f2ff">Parent Inverse Matrix</div>
<div class="gp" style="right:2.0px;top:86.40px;background:#8a96c8"></div>
<div class="tx r" style="right:5.50px;top:91.87px;color:#f0f2ff">Parent Matrix</div>
<div class="gp" style="right:2.0px;top:93.17px;background:#8a96c8"></div>
<div class="tx r" style="right:5.50px;top:98.64px;color:#f0f2ff">Select Handle</div>
<div class="gp" style="right:2.0px;top:99.94px;background:#8a96c8"></div>
<div class="tx r" style="right:5.50px;top:105.41px;color:#f0f2ff">Trans Minus Rotate Pivot</div>
<div class="gp" style="right:2.0px;top:106.71px;background:#8a96c8"></div>
<div class="tx r" style="right:5.50px;top:112.18px;color:#f0f2ff">World Inverse Matrix</div>
<div class="gp" style="right:2.0px;top:113.48px;background:#8a96c8"></div>
<div class="tx r" style="right:5.50px;top:118.95px;color:#f0f2ff">World Matrix</div>
<div class="gp" style="right:2.0px;top:120.25px;background:#8a96c8"></div>
<div class="tx r" style="right:5.50px;top:125.72px;color:#f0f2ff">Xform Matrix</div>
</div>
<svg class="abs" style="left:392.20px;top:258.42px" width="8" height="8" viewBox="0 0 8 8"><path d="M2.6,0.5 L6.9,0.5 L4.6,7.4 L0.2,7.4Z" fill="#f3eef2" stroke="#2a2a2a" stroke-width="0.35"/><path d="M5.6,2.0 L2.4,5.4" stroke="#8a3040" stroke-width="1.1"/></svg>
<svg class="abs" style="left:438.50px;top:259.62px" width="6" height="6" viewBox="0 0 6 6"><rect x="0.2" y="0.2" width="5" height="5" fill="#cfcfcf"/><path d="M0.2,1.9 H5.2 M0.2,3.5 H5.2" stroke="#7a7a7a" stroke-width="0.6"/></svg>
<div class="lbl" style="left:215.60px;top:296.50px;color:#78dcae;">locator_UP</div>
<div class="nd" style="left:215.00px;top:304.80px;width:51.80px;height:133.80px;background:#686868;box-shadow:0 0 0 1.3px #62cfa2;">
<div class="hd" style="height:8.58px;background:#6b6b6b"></div>
<div class="sr" style="top:8.58px;height:7.92px;background:#575757"></div>
<div class="rw" style="top:16.50px;height:6.84px;background:#626262"></div>
<div class="rw" style="top:23.29px;height:6.84px;background:#686868"></div>
<div class="rw" style="top:30.08px;height:6.84px;background:#626262"></div>
<div class="rw" style="top:36.88px;height:6.84px;background:#686868"></div>
<div class="rw" style="top:43.66px;height:6.84px;background:#626262"></div>
<div class="rw" style="top:50.45px;height:6.84px;background:#686868"></div>
<div class="rw" style="top:57.24px;height:6.84px;background:#626262"></div>
<div class="rw" style="top:64.03px;height:6.84px;background:#686868"></div>
<div class="rw" style="top:70.82px;height:6.84px;background:#626262"></div>
<div class="rw" style="top:77.61px;height:6.84px;background:#686868"></div>
<div class="rw" style="top:84.41px;height:6.84px;background:#626262"></div>
<div class="rw" style="top:91.19px;height:6.84px;background:#686868"></div>
<div class="rw" style="top:97.98px;height:6.84px;background:#626262"></div>
<div class="rw" style="top:104.77px;height:6.84px;background:#686868"></div>
<div class="rw" style="top:111.56px;height:6.84px;background:#626262"></div>
<div class="rw" style="top:118.35px;height:6.84px;background:#686868"></div>
<div class="rw" style="top:125.14px;height:6.84px;background:#626262"></div>
<div class="tx" style="left:5.70px;top:16.90px;color:#ececec">Translate</div>
<div class="gp" style="left:1.3px;top:18.20px;background:#8a8a8a"></div>
<div class="tx" style="left:5.70px;top:23.69px;color:#ececec">Rotate</div>
<div class="gp" style="left:1.3px;top:24.99px;background:#8a8a8a"></div>
<div class="tx" style="left:5.70px;top:30.48px;color:#ececec">Scale</div>
<div class="gp" style="left:1.3px;top:31.78px;background:#8a8a8a"></div>
<div class="tx" style="left:5.70px;top:37.27px;color:#ececec">Visibility</div>
<div class="tx r" style="right:5.50px;top:44.06px;color:#ececec">Bounding Box</div>
<div class="gp" style="right:2.0px;top:45.36px;background:#8a8a8a"></div>
<div class="tx r" style="right:5.50px;top:50.85px;color:#ececec">Center</div>
<div class="gp" style="right:2.0px;top:52.15px;background:#8a8a8a"></div>
<div class="tx r" style="right:5.50px;top:57.64px;color:#ececec">Inverse Matrix</div>
<div class="tx r" style="right:5.50px;top:64.43px;color:#ececec">Matrix</div>
<div class="tx r" style="right:5.50px;top:71.22px;color:#ececec">Message</div>
<div class="tx r" style="right:5.50px;top:78.01px;color:#ececec">Object Color RGB</div>
<div class="gp" style="right:2.0px;top:79.31px;background:#8a8a8a"></div>
<div class="tx r" style="right:5.50px;top:84.80px;color:#ececec">Parent Inverse Matrix</div>
<div class="gp" style="right:2.0px;top:86.10px;background:#8a8a8a"></div>
<div class="tx r" style="right:5.50px;top:91.59px;color:#ececec">Parent Matrix</div>
<div class="gp" style="right:2.0px;top:92.89px;background:#8a8a8a"></div>
<div class="tx r" style="right:5.50px;top:98.38px;color:#ececec">Select Handle</div>
<div class="gp" style="right:2.0px;top:99.68px;background:#8a8a8a"></div>
<div class="tx r" style="right:5.50px;top:105.17px;color:#ececec">Trans Minu...tate Pivot</div>
<div class="gp" style="right:2.0px;top:106.47px;background:#8a8a8a"></div>
<div class="tx r" style="right:5.50px;top:111.96px;color:#ececec">World Inverse Matrix</div>
<div class="gp" style="right:2.0px;top:113.26px;background:#8a8a8a"></div>
<div class="tx r" style="right:5.50px;top:118.75px;color:#ececec">World Matrix</div>
<div class="gp" style="right:2.0px;top:120.05px;background:#8a8a8a"></div>
<div class="tx r" style="right:5.50px;top:125.54px;color:#ececec">Xform Matrix</div>
</div>
<svg class="abs" style="left:219.40px;top:305.29px" width="8" height="8" viewBox="0 0 8 8"><path d="M2.6,0.5 L6.9,0.5 L4.6,7.4 L0.2,7.4Z" fill="#f3eef2" stroke="#2a2a2a" stroke-width="0.35"/><path d="M5.6,2.0 L2.4,5.4" stroke="#8a3040" stroke-width="1.1"/></svg>
<svg class="abs" style="left:257.80px;top:306.49px" width="6" height="6" viewBox="0 0 6 6"><rect x="0.2" y="0.2" width="5" height="5" fill="#cfcfcf"/><path d="M0.2,1.9 H5.2 M0.2,3.5 H5.2" stroke="#7a7a7a" stroke-width="0.6"/></svg>
<svg class="abs" style="left:0;top:0" width="690" height="446">
<circle cx="160.20" cy="33.37" r="2.6" fill="#ffffff" stroke="#141414" stroke-width="0.7"/>
<circle cx="212.00" cy="33.37" r="2.6" fill="#659a9e" stroke="#141414" stroke-width="0.7"/>
<circle cx="160.20" cy="49.20" r="2.05" fill="#8fae86" stroke="#141414" stroke-width="0.7"/>
<circle cx="212.00" cy="49.20" r="2.05" fill="#8fae86" stroke="#141414" stroke-width="0.7"/>
<circle cx="160.20" cy="55.96" r="2.05" fill="#8fae86" stroke="#141414" stroke-width="0.7"/>
<circle cx="212.00" cy="55.96" r="2.05" fill="#8fae86" stroke="#141414" stroke-width="0.7"/>
<circle cx="160.20" cy="62.72" r="2.05" fill="#8fae86" stroke="#141414" stroke-width="0.7"/>
<circle cx="212.00" cy="62.72" r="2.05" fill="#8fae86" stroke="#141414" stroke-width="0.7"/>
<circle cx="160.20" cy="69.48" r="2.05" fill="#ead8b2" stroke="#141414" stroke-width="0.7"/>
<circle cx="212.00" cy="69.48" r="2.05" fill="#ead8b2" stroke="#141414" stroke-width="0.7"/>
<circle cx="212.00" cy="76.24" r="2.05" fill="#000000" stroke="#141414" stroke-width="0.7"/>
<circle cx="212.00" cy="83.00" r="2.05" fill="#8fae86" stroke="#141414" stroke-width="0.7"/>
<circle cx="212.00" cy="89.76" r="2.05" fill="#659a9e" stroke="#141414" stroke-width="0.7"/>
<circle cx="212.00" cy="96.52" r="2.05" fill="#659a9e" stroke="#141414" stroke-width="0.7"/>
<circle cx="212.00" cy="103.28" r="2.05" fill="#1a2cd0" stroke="#141414" stroke-width="0.7"/>
<circle cx="212.00" cy="110.04" r="2.05" fill="#e3222a" stroke="#141414" stroke-width="0.7"/>
<circle cx="212.00" cy="116.80" r="2.05" fill="#659a9e" stroke="#141414" stroke-width="0.7"/>
<circle cx="212.00" cy="123.56" r="2.05" fill="#659a9e" stroke="#141414" stroke-width="0.7"/>
<circle cx="212.00" cy="130.32" r="2.05" fill="#a3b98a" stroke="#141414" stroke-width="0.7"/>
<circle cx="212.00" cy="137.08" r="2.05" fill="#a3b98a" stroke="#141414" stroke-width="0.7"/>
<circle cx="212.00" cy="143.84" r="2.05" fill="#659a9e" stroke="#141414" stroke-width="0.7"/>
<circle cx="212.00" cy="150.60" r="2.05" fill="#659a9e" stroke="#141414" stroke-width="0.7"/>
<circle cx="212.00" cy="157.36" r="2.05" fill="#659a9e" stroke="#141414" stroke-width="0.7"/>
<circle cx="261.80" cy="79.46" r="2.6" fill="#f4a61a" stroke="#141414" stroke-width="0.7"/>
<circle cx="314.70" cy="79.46" r="2.6" fill="#659a9e" stroke="#141414" stroke-width="0.7"/>
<circle cx="314.70" cy="95.80" r="2.05" fill="#659a9e" stroke="#141414" stroke-width="0.7"/>
<circle cx="314.70" cy="102.54" r="2.05" fill="#1a2cd0" stroke="#141414" stroke-width="0.7"/>
<circle cx="261.80" cy="109.28" r="2.05" fill="#ead8b2" stroke="#141414" stroke-width="0.7"/>
<circle cx="314.70" cy="109.28" r="2.05" fill="#ead8b2" stroke="#141414" stroke-width="0.7"/>
<circle cx="261.80" cy="116.02" r="2.05" fill="#ead8b2" stroke="#141414" stroke-width="0.7"/>
<circle cx="314.70" cy="116.02" r="2.05" fill="#ead8b2" stroke="#141414" stroke-width="0.7"/>
<circle cx="261.80" cy="122.76" r="2.05" fill="#659a9e" stroke="#141414" stroke-width="0.7"/>
<circle cx="314.70" cy="122.76" r="2.05" fill="#659a9e" stroke="#141414" stroke-width="0.7"/>
<circle cx="261.80" cy="129.50" r="2.05" fill="#659a9e" stroke="#141414" stroke-width="0.7"/>
<circle cx="314.70" cy="129.50" r="2.05" fill="#659a9e" stroke="#141414" stroke-width="0.7"/>
<circle cx="261.80" cy="136.24" r="2.05" fill="#659a9e" stroke="#141414" stroke-width="0.7"/>
<circle cx="314.70" cy="136.24" r="2.05" fill="#659a9e" stroke="#141414" stroke-width="0.7"/>
<circle cx="261.80" cy="142.98" r="2.05" fill="#659a9e" stroke="#141414" stroke-width="0.7"/>
<circle cx="314.70" cy="142.98" r="2.05" fill="#659a9e" stroke="#141414" stroke-width="0.7"/>
<circle cx="261.80" cy="149.72" r="2.05" fill="#659a9e" stroke="#141414" stroke-width="0.7"/>
<circle cx="314.70" cy="149.72" r="2.05" fill="#659a9e" stroke="#141414" stroke-width="0.7"/>
<circle cx="261.80" cy="156.46" r="2.05" fill="#000000" stroke="#141414" stroke-width="0.7"/>
<circle cx="314.70" cy="156.46" r="2.05" fill="#000000" stroke="#141414" stroke-width="0.7"/>
<circle cx="392.20" cy="144.99" r="2.6" fill="#f4a61a" stroke="#141414" stroke-width="0.7"/>
<circle cx="456.00" cy="144.99" r="2.6" fill="#659a9e" stroke="#141414" stroke-width="0.7"/>
<circle cx="456.00" cy="161.90" r="2.05" fill="#1a2cd0" stroke="#141414" stroke-width="0.7"/>
<circle cx="456.00" cy="168.43" r="2.05" fill="#659a9e" stroke="#141414" stroke-width="0.7"/>
<circle cx="392.20" cy="174.96" r="2.05" fill="#000000" stroke="#141414" stroke-width="0.7"/>
<circle cx="392.20" cy="181.49" r="2.05" fill="#000000" stroke="#141414" stroke-width="0.7"/>
<circle cx="624.00" cy="83.56" r="2.6" fill="#7a9ea6" stroke="#141414" stroke-width="0.7"/>
<circle cx="675.00" cy="83.56" r="2.6" fill="#ffffff" stroke="#141414" stroke-width="0.7"/>
<circle cx="624.00" cy="99.90" r="2.05" fill="#8fae86" stroke="#141414" stroke-width="0.7"/>
<circle cx="675.00" cy="99.90" r="2.05" fill="#8fae86" stroke="#141414" stroke-width="0.7"/>
<circle cx="624.00" cy="106.63" r="2.05" fill="#8fae86" stroke="#141414" stroke-width="0.7"/>
<circle cx="675.00" cy="106.63" r="2.05" fill="#8fae86" stroke="#141414" stroke-width="0.7"/>
<circle cx="624.00" cy="113.36" r="2.05" fill="#8fae86" stroke="#141414" stroke-width="0.7"/>
<circle cx="675.00" cy="113.36" r="2.05" fill="#8fae86" stroke="#141414" stroke-width="0.7"/>
<circle cx="624.00" cy="120.09" r="2.05" fill="#ead8b2" stroke="#141414" stroke-width="0.7"/>
<circle cx="675.00" cy="120.09" r="2.05" fill="#ead8b2" stroke="#141414" stroke-width="0.7"/>
<circle cx="675.00" cy="126.82" r="2.05" fill="#000000" stroke="#141414" stroke-width="0.7"/>
<circle cx="675.00" cy="133.55" r="2.05" fill="#8fae86" stroke="#141414" stroke-width="0.7"/>
<circle cx="675.00" cy="140.28" r="2.05" fill="#659a9e" stroke="#141414" stroke-width="0.7"/>
<circle cx="675.00" cy="147.01" r="2.05" fill="#659a9e" stroke="#141414" stroke-width="0.7"/>
<circle cx="675.00" cy="153.74" r="2.05" fill="#1a2cd0" stroke="#141414" stroke-width="0.7"/>
<circle cx="675.00" cy="160.47" r="2.05" fill="#e3222a" stroke="#141414" stroke-width="0.7"/>
<circle cx="675.00" cy="167.20" r="2.05" fill="#659a9e" stroke="#141414" stroke-width="0.7"/>
<circle cx="675.00" cy="173.93" r="2.05" fill="#659a9e" stroke="#141414" stroke-width="0.7"/>
<circle cx="675.00" cy="180.66" r="2.05" fill="#a3b98a" stroke="#141414" stroke-width="0.7"/>
<circle cx="675.00" cy="187.39" r="2.05" fill="#a3b98a" stroke="#141414" stroke-width="0.7"/>
<circle cx="675.00" cy="194.12" r="2.05" fill="#659a9e" stroke="#141414" stroke-width="0.7"/>
<circle cx="675.00" cy="200.85" r="2.05" fill="#659a9e" stroke="#141414" stroke-width="0.7"/>
<circle cx="675.00" cy="207.58" r="2.05" fill="#659a9e" stroke="#141414" stroke-width="0.7"/>
<circle cx="624.00" cy="214.31" r="2.05" fill="#659a9e" stroke="#141414" stroke-width="0.7"/>
<circle cx="140.80" cy="183.33" r="2.6" fill="#ffffff" stroke="#141414" stroke-width="0.7"/>
<circle cx="202.90" cy="183.33" r="2.6" fill="#f4a61a" stroke="#141414" stroke-width="0.7"/>
<circle cx="140.80" cy="199.30" r="2.05" fill="#8fae86" stroke="#141414" stroke-width="0.7"/>
<circle cx="202.90" cy="199.30" r="2.05" fill="#8fae86" stroke="#141414" stroke-width="0.7"/>
<circle cx="140.80" cy="206.05" r="2.05" fill="#8fae86" stroke="#141414" stroke-width="0.7"/>
<circle cx="202.90" cy="206.05" r="2.05" fill="#8fae86" stroke="#141414" stroke-width="0.7"/>
<circle cx="140.80" cy="212.80" r="2.05" fill="#8fae86" stroke="#141414" stroke-width="0.7"/>
<circle cx="202.90" cy="212.80" r="2.05" fill="#8fae86" stroke="#141414" stroke-width="0.7"/>
<circle cx="140.80" cy="219.55" r="2.05" fill="#ead8b2" stroke="#141414" stroke-width="0.7"/>
<circle cx="202.90" cy="219.55" r="2.05" fill="#ead8b2" stroke="#141414" stroke-width="0.7"/>
<circle cx="202.90" cy="226.30" r="2.05" fill="#000000" stroke="#141414" stroke-width="0.7"/>
<circle cx="202.90" cy="233.05" r="2.05" fill="#8fae86" stroke="#141414" stroke-width="0.7"/>
<circle cx="202.90" cy="239.80" r="2.05" fill="#659a9e" stroke="#141414" stroke-width="0.7"/>
<circle cx="202.90" cy="246.55" r="2.05" fill="#659a9e" stroke="#141414" stroke-width="0.7"/>
<circle cx="202.90" cy="253.30" r="2.05" fill="#1a2cd0" stroke="#141414" stroke-width="0.7"/>
<circle cx="202.90" cy="260.05" r="2.05" fill="#e3222a" stroke="#141414" stroke-width="0.7"/>
<circle cx="202.90" cy="266.80" r="2.05" fill="#659a9e" stroke="#141414" stroke-width="0.7"/>
<circle cx="202.90" cy="273.55" r="2.05" fill="#659a9e" stroke="#141414" stroke-width="0.7"/>
<circle cx="202.90" cy="280.30" r="2.05" fill="#a3b98a" stroke="#141414" stroke-width="0.7"/>
<circle cx="202.90" cy="287.05" r="2.05" fill="#a3b98a" stroke="#141414" stroke-width="0.7"/>
<circle cx="202.90" cy="293.80" r="2.05" fill="#659a9e" stroke="#141414" stroke-width="0.7"/>
<circle cx="202.90" cy="300.55" r="2.05" fill="#659a9e" stroke="#141414" stroke-width="0.7"/>
<circle cx="202.90" cy="307.30" r="2.05" fill="#659a9e" stroke="#141414" stroke-width="0.7"/>
<circle cx="486.00" cy="205.45" r="2.6" fill="#f4a61a" stroke="#141414" stroke-width="0.7"/>
<circle cx="539.00" cy="205.45" r="2.6" fill="#659a9e" stroke="#141414" stroke-width="0.7"/>
<circle cx="539.00" cy="221.50" r="2.05" fill="#659a9e" stroke="#141414" stroke-width="0.7"/>
<circle cx="539.00" cy="228.26" r="2.05" fill="#1a2cd0" stroke="#141414" stroke-width="0.7"/>
<circle cx="486.00" cy="235.02" r="2.05" fill="#ead8b2" stroke="#141414" stroke-width="0.7"/>
<circle cx="539.00" cy="235.02" r="2.05" fill="#ead8b2" stroke="#141414" stroke-width="0.7"/>
<circle cx="486.00" cy="241.78" r="2.05" fill="#ead8b2" stroke="#141414" stroke-width="0.7"/>
<circle cx="539.00" cy="241.78" r="2.05" fill="#ead8b2" stroke="#141414" stroke-width="0.7"/>
<circle cx="486.00" cy="248.54" r="2.05" fill="#659a9e" stroke="#141414" stroke-width="0.7"/>
<circle cx="539.00" cy="248.54" r="2.05" fill="#659a9e" stroke="#141414" stroke-width="0.7"/>
<circle cx="486.00" cy="255.30" r="2.05" fill="#659a9e" stroke="#141414" stroke-width="0.7"/>
<circle cx="539.00" cy="255.30" r="2.05" fill="#659a9e" stroke="#141414" stroke-width="0.7"/>
<circle cx="486.00" cy="262.06" r="2.05" fill="#659a9e" stroke="#141414" stroke-width="0.7"/>
<circle cx="539.00" cy="262.06" r="2.05" fill="#659a9e" stroke="#141414" stroke-width="0.7"/>
<circle cx="486.00" cy="268.82" r="2.05" fill="#659a9e" stroke="#141414" stroke-width="0.7"/>
<circle cx="539.00" cy="268.82" r="2.05" fill="#659a9e" stroke="#141414" stroke-width="0.7"/>
<circle cx="486.00" cy="275.58" r="2.05" fill="#659a9e" stroke="#141414" stroke-width="0.7"/>
<circle cx="539.00" cy="275.58" r="2.05" fill="#659a9e" stroke="#141414" stroke-width="0.7"/>
<circle cx="486.00" cy="282.34" r="2.05" fill="#000000" stroke="#141414" stroke-width="0.7"/>
<circle cx="539.00" cy="282.34" r="2.05" fill="#000000" stroke="#141414" stroke-width="0.7"/>
<circle cx="556.50" cy="189.81" r="2.6" fill="#7a9ea6" stroke="#141414" stroke-width="0.7"/>
<circle cx="609.00" cy="189.81" r="2.6" fill="#7a9ea6" stroke="#141414" stroke-width="0.7"/>
<circle cx="609.00" cy="206.40" r="2.05" fill="#1a2cd0" stroke="#141414" stroke-width="0.7"/>
<circle cx="609.00" cy="213.30" r="2.05" fill="#659a9e" stroke="#141414" stroke-width="0.7"/>
<circle cx="556.50" cy="220.20" r="2.05" fill="#659a9e" stroke="#141414" stroke-width="0.7"/>
<circle cx="282.30" cy="215.35" r="2.6" fill="#f4a61a" stroke="#141414" stroke-width="0.7"/>
<circle cx="335.00" cy="215.35" r="2.6" fill="#659a9e" stroke="#141414" stroke-width="0.7"/>
<circle cx="335.00" cy="231.10" r="2.05" fill="#659a9e" stroke="#141414" stroke-width="0.7"/>
<circle cx="335.00" cy="237.86" r="2.05" fill="#1a2cd0" stroke="#141414" stroke-width="0.7"/>
<circle cx="282.30" cy="244.62" r="2.05" fill="#ead8b2" stroke="#141414" stroke-width="0.7"/>
<circle cx="335.00" cy="244.62" r="2.05" fill="#ead8b2" stroke="#141414" stroke-width="0.7"/>
<circle cx="282.30" cy="251.38" r="2.05" fill="#ead8b2" stroke="#141414" stroke-width="0.7"/>
<circle cx="335.00" cy="251.38" r="2.05" fill="#ead8b2" stroke="#141414" stroke-width="0.7"/>
<circle cx="282.30" cy="258.14" r="2.05" fill="#659a9e" stroke="#141414" stroke-width="0.7"/>
<circle cx="335.00" cy="258.14" r="2.05" fill="#659a9e" stroke="#141414" stroke-width="0.7"/>
<circle cx="282.30" cy="264.90" r="2.05" fill="#659a9e" stroke="#141414" stroke-width="0.7"/>
<circle cx="335.00" cy="264.90" r="2.05" fill="#659a9e" stroke="#141414" stroke-width="0.7"/>
<circle cx="282.30" cy="271.66" r="2.05" fill="#659a9e" stroke="#141414" stroke-width="0.7"/>
<circle cx="335.00" cy="271.66" r="2.05" fill="#659a9e" stroke="#141414" stroke-width="0.7"/>
<circle cx="282.30" cy="278.42" r="2.05" fill="#659a9e" stroke="#141414" stroke-width="0.7"/>
<circle cx="335.00" cy="278.42" r="2.05" fill="#659a9e" stroke="#141414" stroke-width="0.7"/>
<circle cx="282.30" cy="285.18" r="2.05" fill="#659a9e" stroke="#141414" stroke-width="0.7"/>
<circle cx="335.00" cy="285.18" r="2.05" fill="#659a9e" stroke="#141414" stroke-width="0.7"/>
<circle cx="282.30" cy="291.94" r="2.05" fill="#000000" stroke="#141414" stroke-width="0.7"/>
<circle cx="335.00" cy="291.94" r="2.05" fill="#000000" stroke="#141414" stroke-width="0.7"/>
<circle cx="387.80" cy="262.22" r="2.6" fill="#ffffff" stroke="#141414" stroke-width="0.7"/>
<circle cx="447.50" cy="262.22" r="2.6" fill="#659a9e" stroke="#141414" stroke-width="0.7"/>
<circle cx="387.80" cy="278.20" r="2.05" fill="#8fae86" stroke="#141414" stroke-width="0.7"/>
<circle cx="447.50" cy="278.20" r="2.05" fill="#8fae86" stroke="#141414" stroke-width="0.7"/>
<circle cx="387.80" cy="284.97" r="2.05" fill="#8fae86" stroke="#141414" stroke-width="0.7"/>
<circle cx="447.50" cy="284.97" r="2.05" fill="#8fae86" stroke="#141414" stroke-width="0.7"/>
<circle cx="387.80" cy="291.74" r="2.05" fill="#8fae86" stroke="#141414" stroke-width="0.7"/>
<circle cx="447.50" cy="291.74" r="2.05" fill="#8fae86" stroke="#141414" stroke-width="0.7"/>
<circle cx="387.80" cy="298.51" r="2.05" fill="#ead8b2" stroke="#141414" stroke-width="0.7"/>
<circle cx="447.50" cy="298.51" r="2.05" fill="#ead8b2" stroke="#141414" stroke-width="0.7"/>
<circle cx="447.50" cy="305.28" r="2.05" fill="#000000" stroke="#141414" stroke-width="0.7"/>
<circle cx="447.50" cy="312.05" r="2.05" fill="#8fae86" stroke="#141414" stroke-width="0.7"/>
<circle cx="447.50" cy="318.82" r="2.05" fill="#659a9e" stroke="#141414" stroke-width="0.7"/>
<circle cx="447.50" cy="325.59" r="2.05" fill="#659a9e" stroke="#141414" stroke-width="0.7"/>
<circle cx="447.50" cy="332.36" r="2.05" fill="#1a2cd0" stroke="#141414" stroke-width="0.7"/>
<circle cx="447.50" cy="339.13" r="2.05" fill="#e3222a" stroke="#141414" stroke-width="0.7"/>
<circle cx="447.50" cy="345.90" r="2.05" fill="#659a9e" stroke="#141414" stroke-width="0.7"/>
<circle cx="447.50" cy="352.67" r="2.05" fill="#659a9e" stroke="#141414" stroke-width="0.7"/>
<circle cx="447.50" cy="359.44" r="2.05" fill="#a3b98a" stroke="#141414" stroke-width="0.7"/>
<circle cx="447.50" cy="366.21" r="2.05" fill="#a3b98a" stroke="#141414" stroke-width="0.7"/>
<circle cx="447.50" cy="372.98" r="2.05" fill="#659a9e" stroke="#141414" stroke-width="0.7"/>
<circle cx="447.50" cy="379.75" r="2.05" fill="#659a9e" stroke="#141414" stroke-width="0.7"/>
<circle cx="447.50" cy="386.52" r="2.05" fill="#659a9e" stroke="#141414" stroke-width="0.7"/>
<circle cx="215.00" cy="309.09" r="2.6" fill="#ffffff" stroke="#141414" stroke-width="0.7"/>
<circle cx="266.80" cy="309.09" r="2.6" fill="#659a9e" stroke="#141414" stroke-width="0.7"/>
<circle cx="215.00" cy="324.70" r="2.05" fill="#8fae86" stroke="#141414" stroke-width="0.7"/>
<circle cx="266.80" cy="324.70" r="2.05" fill="#8fae86" stroke="#141414" stroke-width="0.7"/>
<circle cx="215.00" cy="331.49" r="2.05" fill="#8fae86" stroke="#141414" stroke-width="0.7"/>
<circle cx="266.80" cy="331.49" r="2.05" fill="#8fae86" stroke="#141414" stroke-width="0.7"/>
<circle cx="215.00" cy="338.28" r="2.05" fill="#8fae86" stroke="#141414" stroke-width="0.7"/>
<circle cx="266.80" cy="338.28" r="2.05" fill="#8fae86" stroke="#141414" stroke-width="0.7"/>
<circle cx="215.00" cy="345.07" r="2.05" fill="#ead8b2" stroke="#141414" stroke-width="0.7"/>
<circle cx="266.80" cy="345.07" r="2.05" fill="#ead8b2" stroke="#141414" stroke-width="0.7"/>
<circle cx="266.80" cy="351.86" r="2.05" fill="#000000" stroke="#141414" stroke-width="0.7"/>
<circle cx="266.80" cy="358.65" r="2.05" fill="#8fae86" stroke="#141414" stroke-width="0.7"/>
<circle cx="266.80" cy="365.44" r="2.05" fill="#659a9e" stroke="#141414" stroke-width="0.7"/>
<circle cx="266.80" cy="372.23" r="2.05" fill="#659a9e" stroke="#141414" stroke-width="0.7"/>
<circle cx="266.80" cy="379.02" r="2.05" fill="#1a2cd0" stroke="#141414" stroke-width="0.7"/>
<circle cx="266.80" cy="385.81" r="2.05" fill="#e3222a" stroke="#141414" stroke-width="0.7"/>
<circle cx="266.80" cy="392.60" r="2.05" fill="#659a9e" stroke="#141414" stroke-width="0.7"/>
<circle cx="266.80" cy="399.39" r="2.05" fill="#659a9e" stroke="#141414" stroke-width="0.7"/>
<circle cx="266.80" cy="406.18" r="2.05" fill="#a3b98a" stroke="#141414" stroke-width="0.7"/>
<circle cx="266.80" cy="412.97" r="2.05" fill="#a3b98a" stroke="#141414" stroke-width="0.7"/>
<circle cx="266.80" cy="419.76" r="2.05" fill="#659a9e" stroke="#141414" stroke-width="0.7"/>
<circle cx="266.80" cy="426.55" r="2.05" fill="#659a9e" stroke="#141414" stroke-width="0.7"/>
<circle cx="266.80" cy="433.34" r="2.05" fill="#659a9e" stroke="#141414" stroke-width="0.7"/>
</svg>
<svg class="abs" style="left:0;top:0" width="690" height="446" fill="none" stroke="#b83448" stroke-width="1.15" stroke-linecap="round" stroke-linejoin="round"><g>
<path stroke-width="1.35" d="M2.3,31 C40,30.6 80,29.8 111,29.3 C112.8,27 114.5,24.5 116.2,22.2 M113.2,29.6 C114.2,50 112.8,70 114.4,85 C80,86.2 40,85 2.5,85.4 C2.1,65 2.8,45 2.3,31"/>
<path d="M112.4,20.6 L117.4,25 M118,20.2 L113.4,24.6"/>
<path d="M100.5,12.5 C101.5,8 103.5,3 105.4,2.6 C107,3.5 108,11 108.6,15.7 M101.4,8.4 L110.7,8.4"/>
<path d="M116.7,2.6 L116.7,15.4"/>
<path d="M120.2,12.5 L120.5,4.3 L123.4,8.7 L126.6,5.5 L127.8,15.4"/>
<path d="M137.8,13.9 L137.8,4.9 L142.3,10.5 L145.3,6 L146.2,13"/>
<path d="M146.2,15.4 L148,10.6 L150.2,15.6 M146.6,13.6 L152,13.6"/>
<path d="M153.2,7.5 L160.4,7.3 M156.6,7.2 L156.6,16.2"/>
<path d="M163,11.3 L163,4.5 C166.5,4.8 167,7.5 163.6,8.4 L168.7,12"/>
<path d="M172.4,7.2 L172.4,13.9"/>
<path d="M177.3,4.5 L182.2,12.4 M183,6.4 L175.4,13.6"/>
<path d="M201.7,3.5 C199,2.8 196.2,3.3 196.5,5.5 C196.8,7.5 201,8 201.3,10 C201.4,11.8 198,11.8 196.5,11.3"/>
<path d="M213.5,2.6 C208,2.2 204.3,3.5 204.5,6.8 C204.3,10.5 207,11.8 211.7,11.3 M205,6.9 L211.7,6.5"/>
<path d="M212.2,2.6 L222.2,2.2 M218.7,2.6 L218.7,10.4"/>
<path d="M227,3 C227,8 228,10.6 230.2,10.4 C232.6,10.2 233.6,7 233.9,3"/>
<path d="M238.7,9.6 L238.7,2.6 C241.5,2.2 244,3 244,4.5 C243.8,6 241,6.3 239,6.1"/>
</g><g stroke="#ac2e3e" stroke-width="1.15">
<path d="M593.6,249 L592,232.5 M588.3,237.6 L591.3,231.2 L596.4,235.6 L593.2,236.8"/>
<ellipse cx="596.6" cy="260.5" rx="2.7" ry="3.4"/>
<path d="M600.8,263.6 L601.2,257.4 L605.4,262.8 L606.2,257"/>
<path d="M608.2,257.4 L608.4,262.8 L611,262.6"/>
<path d="M612.2,257.2 L615.4,261 M618.8,256.4 L613.8,262.8"/>
<path d="M624.6,262.8 L624.4,256 C628.5,255.6 629.5,258.5 625.2,259.4 L630.2,262.4"/>
<path d="M632.8,257.4 C630.8,258.3 630.8,263 633,263 C635.4,263 635.6,257.6 632.8,257.4"/>
<path d="M635.4,254.5 L645.2,254.1 M639.6,254.4 L639.6,261.2"/>
<path d="M642.4,259.8 L645.6,254.2 L649.4,259.4 M643.6,257.6 L648.4,257.4"/>
<path d="M649.8,253.3 L656,253 M653,253.2 L653,259.6"/>
<path d="M658.7,253.2 L658.7,259.6"/>
<path d="M666,253.6 C663.6,254.2 663.4,259.6 666,259.6 C668.8,259.6 669,254 666,253.6"/>
<path d="M671.4,253.6 C671.2,258 672.8,260 674.4,259.4 C675.6,259 676,256.6 676.2,255.2 C676.6,258.6 678.6,260 680,258.8 C681.4,257.6 681.4,253 680.8,251.4"/>
</g></svg>
</body></html>
